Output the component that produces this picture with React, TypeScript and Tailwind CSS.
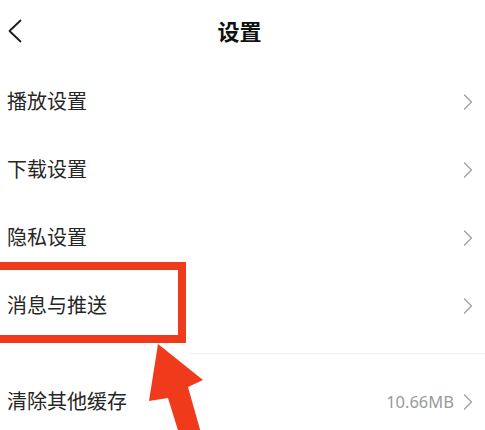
import React from 'react';

const rows = ['播放设置', '下载设置', '隐私设置', '消息与推送'];

function Chevron() {
  return (
    <svg width="10" height="16" viewBox="0 0 10 16" fill="none">
      <polyline points="1.5,1 8.5,8 1.5,15" stroke="#a0a0a0" strokeWidth="1.4" strokeLinecap="round" strokeLinejoin="round" />
    </svg>
  );
}

function Row({ label, value }: { label: string; value?: string }) {
  return (
    <div className="h-[68px] flex items-center justify-between pl-[7px] pr-[12px]">
      <span className="text-[20px] text-[#262626]">{label}</span>
      <span className="flex items-center gap-[9px]">
        {value && <span className="text-[16.5px] text-[#9a9a9a]">{value}</span>}
        <Chevron />
      </span>
    </div>
  );
}

export default function App() {
  return (
    <div
      className="relative w-[485px] h-[430px] overflow-hidden bg-white"
      style={{ fontFamily: '"Noto Sans", "Noto Sans CJK SC", sans-serif' }}
    >
      {/* header */}
      <div className="h-[62px] flex items-center relative">
        <div className="pl-[8px]">
          <svg width="14" height="24" viewBox="0 0 14 24" fill="none">
            <polyline points="12.5,1.5 1.5,12 12.5,22.5" stroke="#1a1a1a" strokeWidth="1.8" strokeLinecap="round" strokeLinejoin="round" />
          </svg>
        </div>
        <div className="absolute inset-0 flex items-center justify-center">
          <span className="text-[22px] font-bold text-[#111] pr-[6px]">设置</span>
        </div>
      </div>

      <div className="mt-[6px]">
        {rows.map((r) => (
          <Row key={r} label={r} />
        ))}
      </div>

      <div className="mt-[13px] ml-[190px] h-px bg-[#ededed]" />

      <div className="mt-[14px]">
        <Row label="清除其他缓存" value="10.66MB" />
      </div>

      {/* annotation box */}
      <div className="absolute left-[-12px] top-[262px] w-[198px] h-[81px] border-[8px] border-[#ef3a1c]" />

      {/* annotation arrow */}
      <svg className="absolute left-0 top-0" width="485" height="430" viewBox="0 0 485 430">
        <polygon
          points="158,344 203,380 188,387 203,440 181,440 168,398 149,401"
          fill="#ef3a1c"
        />
      </svg>
    </div>
  );
}
